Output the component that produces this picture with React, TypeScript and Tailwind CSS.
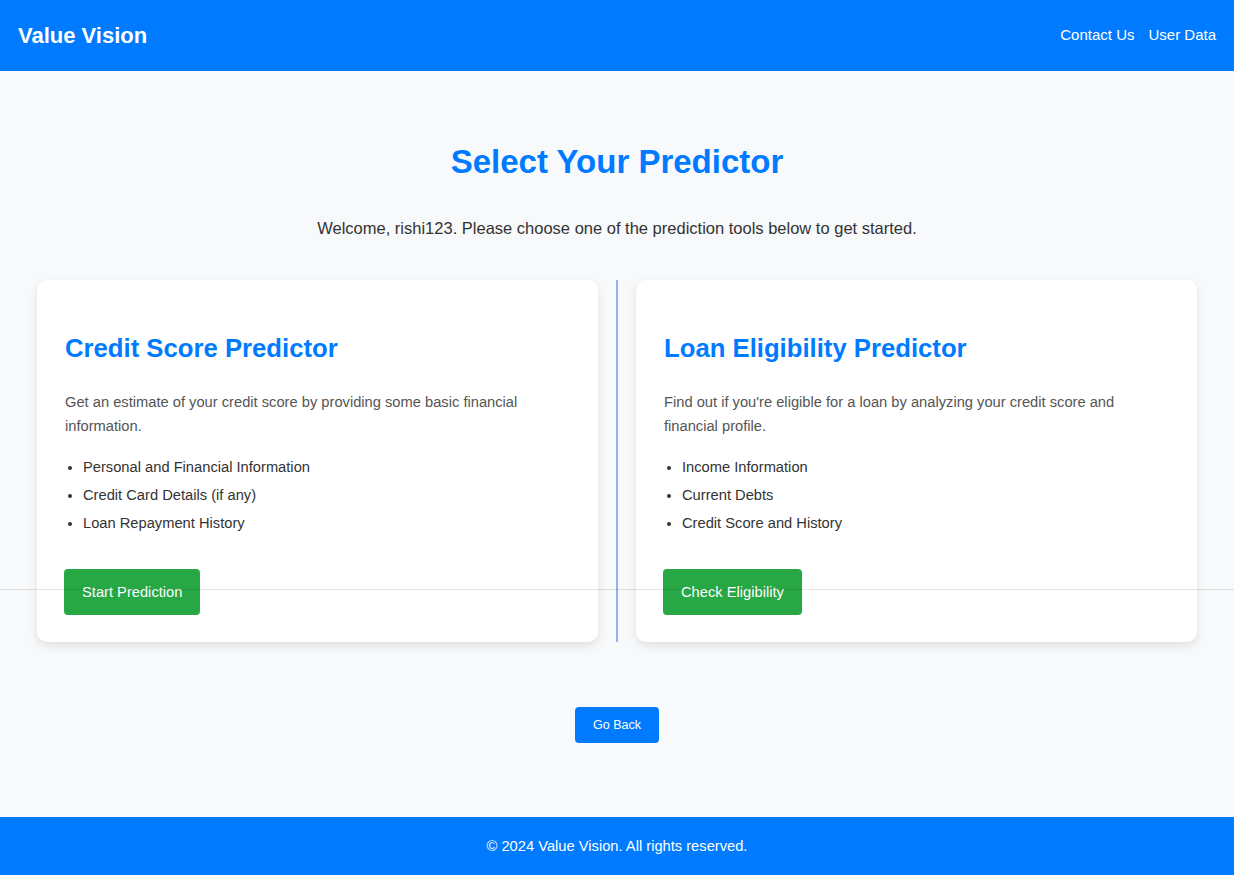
import React from "react";

const Card = ({ title, desc, items, button }: { title: string; desc: string; items: string[]; button: string }) => (
  <div className="flex-1 bg-white rounded-[10px] shadow-[0_4px_10px_rgba(0,0,0,0.1)] px-[28px] pt-[53px] pb-[27px]">
    <h2 className="text-[25.7px] leading-[30px] font-bold text-[#007bff]">{title}</h2>
    <p className="mt-[27px] text-[14.7px] leading-[24px] text-[#555]">{desc}</p>
    <ul className="mt-[15px] list-disc pl-[18px] text-[14.7px] leading-[28px] text-[#333]">
      {items.map((i) => (
        <li key={i}>{i}</li>
      ))}
    </ul>
    <button className="mt-[32px] -ml-px h-[46px] px-[18px] rounded-[4px] bg-[#28a745] text-white text-[14.7px]">{button}</button>
  </div>
);

export default function App() {
  return (
    <div className="relative min-h-screen flex flex-col bg-[#f8f9fa] font-['Liberation_Sans',Arial,sans-serif]">
      <header className="h-[71px] bg-[#007bff] flex items-center justify-between px-[18px]">
        <div className="text-white font-bold text-[22px]">Value Vision</div>
        <nav className="flex gap-[14px] text-white text-[15px]">
          <a>Contact Us</a>
          <a>User Data</a>
        </nav>
      </header>
      <main className="flex-1 flex flex-col items-center pt-[72px]">
        <h1 className="text-[33px] leading-[37px] font-bold text-[#007bff]">Select Your Predictor</h1>
        <p className="mt-[39px] text-[16.5px] leading-[18px] text-[#333]">
          Welcome, rishi123. Please choose one of the prediction tools below to get started.
        </p>
        <div className="mt-[43px] w-full px-[37px] flex items-stretch gap-[18px]">
          <Card
            title="Credit Score Predictor"
            desc="Get an estimate of your credit score by providing some basic financial information."
            items={["Personal and Financial Information", "Credit Card Details (if any)", "Loan Repayment History"]}
            button="Start Prediction"
          />
          <div className="w-[2px] bg-[#8ab6ea]" />
          <Card
            title="Loan Eligibility Predictor"
            desc="Find out if you're eligible for a loan by analyzing your credit score and financial profile."
            items={["Income Information", "Current Debts", "Credit Score and History"]}
            button="Check Eligibility"
          />
        </div>
        <button className="mt-[65px] h-[36px] w-[84px] rounded-[4px] bg-[#007bff] text-white text-[12.5px]">Go Back</button>
      </main>
      <footer className="h-[58px] bg-[#007bff] flex items-center justify-center text-white text-[14.7px]">
        © 2024 Value Vision. All rights reserved.
      </footer>
      <div className="pointer-events-none absolute left-0 right-0 top-[589px] h-px bg-black/10" />
    </div>
  );
}
